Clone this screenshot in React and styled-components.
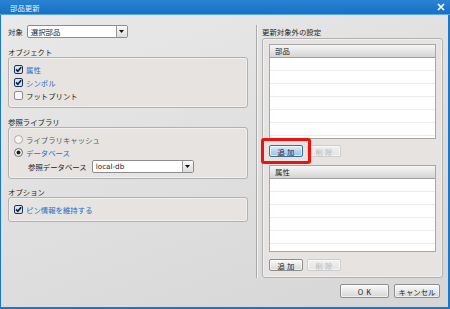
import React from "react";
import styled, { createGlobalStyle } from "styled-components";

const GlobalStyle = createGlobalStyle`
  html, body {
    margin: 0;
    padding: 0;
    width: 450px;
    height: 309px;
    overflow: hidden;
  }
  body {
    font-family: "Noto Sans CJK JP", "Liberation Sans", sans-serif;
    font-size: 7.4px;
    color: #1c1c1c;
  }
`;

const Window = styled.div`
  width: 450px;
  height: 309px;
  box-sizing: border-box;
  display: flex;
  flex-direction: column;
  background: #1c77c9;
`;

const TitleBar = styled.div`
  height: 14px;
  flex: none;
  display: flex;
  align-items: center;
  justify-content: space-between;
  padding: 0 5px 0 10px;
  background: linear-gradient(#2a83d2, #1670c4);
  border-bottom: 1px solid #5aa6e8;
  color: #e8f2fc;
`;

const Body = styled.div`
  flex: 1;
  display: flex;
  flex-direction: column;
  margin: 0 2px 2px 1px;
  background: linear-gradient(160deg, #e9e9e9 0%, #dedede 55%, #d6d6d6 100%);
`;

const Main = styled.div`
  display: flex;
  height: 263px;
`;

const LeftColumn = styled.div`
  width: 240px;
  margin-left: 7px;
  display: flex;
  flex-direction: column;
`;

const Divider = styled.div`
  width: 1px;
  margin: 10px 0 0 8px;
  background: #a9a9a9;
  box-shadow: 1px 0 0 #f4f4f4;
`;

const RightColumn = styled.div`
  width: 181px;
  margin-left: 5px;
  display: flex;
  flex-direction: column;
`;

const TargetRow = styled.div`
  display: flex;
  align-items: center;
  gap: 4px;
  height: 13px;
  margin-top: 10px;
`;

const SectionLabel = styled.div`
  height: 11px;
  line-height: 11px;
  margin-top: ${(p) => p.$top}px;
  white-space: nowrap;
`;

const Group = styled.div`
  box-sizing: border-box;
  height: ${(p) => p.$height}px;
  border: 1px solid #b1b1b1;
  border-radius: 3px;
  background: #e6e3e1;
  box-shadow: inset 0 0 0 1px #f2f0ee;
  padding: ${(p) => p.$pad || "5px 0 0 5px"};
  display: flex;
  flex-direction: column;
`;

const Item = styled.div`
  height: 13px;
  display: flex;
  align-items: center;
  gap: 3px;
  color: ${(p) => (p.$active ? "#2a6cc3" : p.$muted ? "#5a5a5a" : "#1c1c1c")};
  white-space: nowrap;
`;

const SubRow = styled.div`
  height: 14px;
  display: flex;
  align-items: center;
  gap: 5px;
  padding-left: 14px;
  white-space: nowrap;
`;

const Combo = styled.div`
  box-sizing: border-box;
  width: ${(p) => p.$width}px;
  height: ${(p) => p.$height || 13}px;
  display: flex;
  border: 1px solid #8c8c8c;
  border-radius: 2px;
  background: #ffffff;
`;

const ComboText = styled.div`
  flex: 1;
  padding-left: 3px;
  display: flex;
  align-items: center;
  font-family: ${(p) => (p.$latin ? '"DejaVu Sans", sans-serif' : "inherit")};
  font-size: ${(p) => (p.$latin ? "7.2px" : "7.4px")};
`;

const ComboArrow = styled.div`
  width: 10px;
  display: flex;
  align-items: center;
  justify-content: center;
  border-left: 1px solid #9a9a9a;
  background: linear-gradient(#fafafa, #dcdcdc);
`;

const Table = styled.div`
  box-sizing: border-box;
  height: ${(p) => p.$height}px;
  border: 1px solid #a7a7a7;
  background: repeating-linear-gradient(
    #ffffff 0px,
    #ffffff 12px,
    #ececec 12px,
    #ececec 13px
  );
  display: flex;
  flex-direction: column;
  overflow: hidden;
`;

const TableHeader = styled.div`
  height: 12px;
  flex: none;
  line-height: 12px;
  padding-left: 5px;
  border-bottom: 1px solid #a0a0a0;
  background: linear-gradient(#f6f6f6, #e2e2e2 60%, #d4d4d4);
`;

const ButtonRow = styled.div`
  display: flex;
  gap: 4px;
  margin-top: ${(p) => p.$top}px;
`;

const Focus = styled.div`
  position: relative;
`;

const Highlight = styled.div`
  position: absolute;
  left: -8px;
  top: -7px;
  width: 50px;
  height: 26px;
  box-sizing: border-box;
  border: 3px solid #ee1111;
  border-radius: 3px;
  pointer-events: none;
`;

const Button = styled.div`
  box-sizing: border-box;
  width: ${(p) => p.$width || 34}px;
  height: ${(p) => p.$height || 12}px;
  display: flex;
  align-items: center;
  justify-content: center;
  letter-spacing: ${(p) => p.$spacing ?? 2}px;
  padding-left: ${(p) => p.$spacing ?? 2}px;
  border-radius: 2px;
  border: 1px solid
    ${(p) => (p.$focused ? "#3b6fa8" : p.$disabled ? "#cdcdcd" : "#8e8e8e")};
  color: ${(p) => (p.$disabled ? "#b9b9b9" : "#1c1c1c")};
  background: ${(p) =>
    p.$focused
      ? "linear-gradient(#e3eefa, #b6d0ee 55%, #a2c2e8)"
      : p.$disabled
      ? "linear-gradient(#f0f0f0, #e4e4e4)"
      : "linear-gradient(#fbfbfb, #e6e6e6 55%, #d6d6d6)"};
  box-shadow: inset 0 0 0 1px rgba(255, 255, 255, 0.6);
  white-space: nowrap;
`;

const Footer = styled.div`
  display: flex;
  justify-content: flex-end;
  gap: 5px;
  margin-top: 6px;
  padding-right: 8px;
`;

const CheckBox = ({ checked }) => (
  <svg width="9" height="9" viewBox="0 0 9 9">
    <rect
      x="0.5"
      y="0.5"
      width="8"
      height="8"
      rx="1.5"
      fill={checked ? "#d3e2f4" : "#f6f6f6"}
      stroke={checked ? "#1d355a" : "#8d8d8d"}
    />
    {checked && (
      <path
        d="M2 4.4 L3.8 6.3 L7.2 2.2"
        fill="none"
        stroke="#0f2138"
        strokeWidth="1.7"
      />
    )}
  </svg>
);

const Radio = ({ checked }) => (
  <svg width="9" height="9" viewBox="0 0 9 9">
    <circle
      cx="4.5"
      cy="4.5"
      r="4"
      fill="#f6f6f6"
      stroke={checked ? "#6d6d6d" : "#aaaaaa"}
    />
    {checked && <circle cx="4.5" cy="4.5" r="2" fill="#202020" />}
  </svg>
);

const Arrow = () => (
  <svg width="5" height="3" viewBox="0 0 5 3">
    <path d="M0 0 H5 L2.5 3 Z" fill="#111" />
  </svg>
);

export default function App() {
  return (
    <>
      <GlobalStyle />
      <Window>
        <TitleBar>
          <span>部品更新</span>
          <svg width="8" height="8" viewBox="0 0 8 8">
            <path
              d="M1 1 L7 7 M7 1 L1 7"
              stroke="#ffffff"
              strokeWidth="1.6"
            />
          </svg>
        </TitleBar>
        <Body>
          <Main>
            <LeftColumn>
              <TargetRow>
                <span>対象</span>
                <Combo $width={101}>
                  <ComboText>選択部品</ComboText>
                  <ComboArrow>
                    <Arrow />
                  </ComboArrow>
                </Combo>
              </TargetRow>

              <SectionLabel $top={8}>オブジェクト</SectionLabel>
              <Group $height={51}>
                <Item $active>
                  <CheckBox checked />
                  属性
                </Item>
                <Item $active>
                  <CheckBox checked />
                  シンボル
                </Item>
                <Item>
                  <CheckBox />
                  フットプリント
                </Item>
              </Group>

              <SectionLabel $top={8}>参照ライブラリ</SectionLabel>
              <Group $height={52}>
                <Item $muted>
                  <Radio />
                  ライブラリキャッシュ
                </Item>
                <Item $active>
                  <Radio checked />
                  データベース
                </Item>
                <SubRow>
                  <span>参照データベース</span>
                  <Combo $width={102}>
                    <ComboText $latin>local-db</ComboText>
                    <ComboArrow>
                      <Arrow />
                    </ComboArrow>
                  </Combo>
                </SubRow>
              </Group>

              <SectionLabel $top={7}>オプション</SectionLabel>
              <Group $height={25}>
                <Item $active>
                  <CheckBox checked />
                  ピン情報を維持する
                </Item>
              </Group>
            </LeftColumn>

            <Divider />

            <RightColumn>
              <SectionLabel $top={11}>更新対象外の設定</SectionLabel>
              <Group $height={240} $pad="5px 6px 0 6px" style={{ marginTop: 1 }}>
                <Table $height={95}>
                  <TableHeader>部品</TableHeader>
                </Table>
                <ButtonRow $top={6}>
                  <Focus>
                    <Button $focused>追加</Button>
                    <Highlight />
                  </Focus>
                  <Button $disabled>削除</Button>
                </ButtonRow>
                <Table $height={87} style={{ marginTop: 8 }}>
                  <TableHeader>属性</TableHeader>
                </Table>
                <ButtonRow $top={7}>
                  <Button>追加</Button>
                  <Button $disabled>削除</Button>
                </ButtonRow>
              </Group>
            </RightColumn>
          </Main>

          <Footer>
            <Button $width={49} $height={14} $spacing={3}>
              OK
            </Button>
            <Button $width={46} $height={14} $spacing={0}>
              キャンセル
            </Button>
          </Footer>
        </Body>
      </Window>
    </>
  );
}
